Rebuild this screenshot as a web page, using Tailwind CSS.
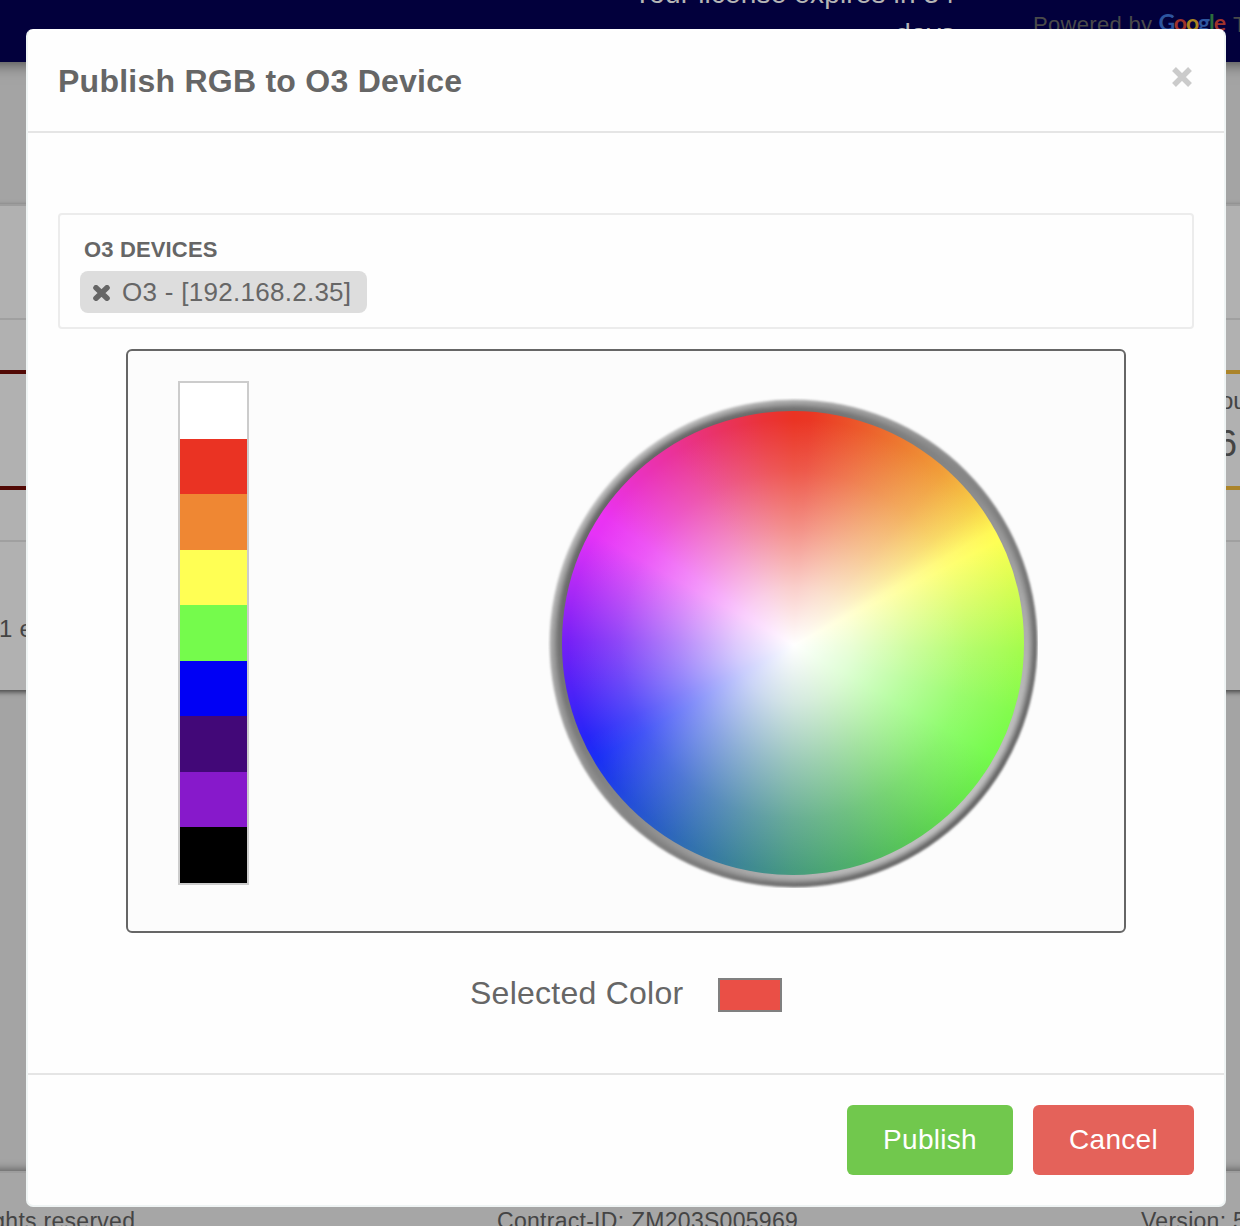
<!DOCTYPE html>
<html lang="en">
<head>
<meta charset="utf-8">
<title>Publish RGB to O3 Device</title>
<script src="https://cdn.jsdelivr.net/npm/@tailwindcss/browser@4"></script>
</head>
<body class="relative h-[1226px] w-[1240px] overflow-hidden bg-[#a4a4a4] font-['Liberation_Sans',Arial,sans-serif] text-[#666]">

<!-- Dimmed page behind the dialog -->
<div class="flex h-[1226px] flex-col overflow-hidden text-[#444]">
  <header class="relative z-10 -mx-[20px] flex h-[62px] shrink-0 justify-end overflow-visible bg-[#02003c] pr-[20px] shadow-[0_2px_14px_rgba(0,0,0,0.55)]">
    <p class="-mt-[26px] mr-[78px] w-[340px] text-right text-[28px] leading-[40px] tracking-[0.15px] text-[#b5b5b5]">Your license expires in 34 days</p>
    <p class="mt-[10px] flex w-[207px] items-baseline overflow-hidden text-[22px] leading-[26px] tracking-[0.32px] whitespace-nowrap text-[#4a4a4a]">Powered by<span class="ml-[6px] w-[67px] -translate-y-[1px] font-['Lato',sans-serif] text-[23px] font-bold tracking-[-1.1px]"><span class="text-[#2d559f]">G</span><span class="text-[#a0332b]">o</span><span class="text-[#ab8420]">o</span><span class="text-[#2d559f]">g</span><span class="text-[#2b6d3c]">l</span><span class="text-[#a0332b]">e</span></span><span class="ml-[8px]">Translate</span></p>
  </header>
  <main class="-mx-[20px] mt-[142px] h-[486px] shrink-0 border-t-2 border-[#9d9d9d] bg-[#b1b1b1] shadow-[0_2px_5px_rgba(0,0,0,0.6)]">
    <div class="h-[114px] border-b-2 border-[#a0a0a0]"></div>
    <div class="flex h-[222px] justify-between border-b-2 border-[#a0a0a0] px-[20px] pt-[50px]">
      <div class="h-[120px] w-[600px] border-y-4 border-[#520a05]"></div>
      <div class="h-[120px] w-[600px] border-y-4 border-[#ab842a] pt-[13px]">
        <p class="pl-[580px] text-[24px] leading-[28px] whitespace-nowrap">our</p>
        <p class="mt-[9px] pl-[577px] text-[36px] leading-[40px]">6</p>
      </div>
    </div>
    <p class="mt-[73px] pl-[19px] text-[24px] leading-[28px] tracking-[0.2px]">1 entries</p>
  </main>
  <footer class="-mx-[20px] mt-[481px] flex h-[60px] shrink-0 border-t-2 border-[#9d9d9d] bg-[#a6a6a6] pt-[35px] text-[23px] leading-[26px] tracking-[0.28px] whitespace-nowrap shadow-[0_-2px_8px_rgba(0,0,0,0.4)]">
    <span class="w-[517px] shrink-0 -indent-[10px]">Rights reserved</span>
    <span class="w-[644px] shrink-0">Contract-ID: ZM203S005969</span>
    <span class="shrink-0">Version: 5.0</span>
  </footer>
</div>

<!-- Dialog -->
<section class="absolute top-[29px] left-[26px] z-20 flex h-[1178px] w-[1200px] flex-col rounded-[7px] border-2 border-[#eff4f4] border-t-white bg-[#fefefe]">
  <header class="flex h-[102px] shrink-0 justify-between border-b-2 border-[#e5e5e5] pr-[32px] pl-[30px]">
    <h1 class="pt-[32px] text-[32px] leading-[36px] font-bold tracking-[0.25px]">Publish RGB to O3 Device</h1>
    <svg class="mt-[36px] h-[20px] w-[20px]" viewBox="0 0 20 20"><path d="M2 2 18 18M18 2 2 18" stroke="#cbcbcb" stroke-width="5.4"/></svg>
  </header>

  <div class="flex h-[940px] shrink-0 flex-col px-[30px] pt-[80px]">
    <div class="h-[116px] shrink-0 rounded-[4px] border-2 border-[#ececec] pt-[21px] pl-[20px]">
      <h2 class="pl-[4px] text-[22px] leading-[28px] font-bold tracking-[0.15px]">O3 DEVICES</h2>
      <div class="mt-[7px] flex h-[42px] w-[287px] items-center rounded-[8px] bg-[#ddd] pl-[13px]">
        <svg class="mt-[2px] h-[16px] w-[17px]" viewBox="0 0 17 16"><path d="M3 2.8 14 13.2M14 2.8 3 13.2" stroke="#666" stroke-width="5.6" stroke-linecap="round"/></svg>
        <span class="ml-[12px] text-[26px] leading-[30px] tracking-[0.28px] whitespace-nowrap">O3 - [192.168.2.35]</span>
      </div>
    </div>

    <div class="mx-[68px] mt-[20px] flex h-[584px] shrink-0 justify-between rounded-[6px] border-2 border-[#666] bg-[#fcfcfc] pt-[30px] pr-[86px] pl-[50px]">
      <div class="grid h-[504px] w-[71px] grid-rows-9 border-2 border-[#ccc]">
        <div class="bg-white"></div>
        <div class="bg-[#ea3323]"></div>
        <div class="bg-[#ef8733]"></div>
        <div class="bg-[#ffff54]"></div>
        <div class="bg-[#75fb4c]"></div>
        <div class="bg-[#0000f5]"></div>
        <div class="bg-[#420878]"></div>
        <div class="bg-[#8719cb]"></div>
        <div class="bg-black"></div>
      </div>
      <div class="relative mt-[17px] h-[490px] w-[490px]">
        <svg class="absolute inset-0 h-[490px] w-[490px]" viewBox="0 0 490 490">
          <defs>
            <linearGradient id="r1" x1=".15" y1=".15" x2=".85" y2=".85"><stop offset="0" stop-color="#c4c4c4"/><stop offset=".5" stop-color="#8c8c8c"/><stop offset="1" stop-color="#707070"/></linearGradient>
            <linearGradient id="r2" x1=".15" y1=".15" x2=".85" y2=".85"><stop offset="0" stop-color="#adadad"/><stop offset=".5" stop-color="#868686"/><stop offset="1" stop-color="#686868"/></linearGradient>
            <linearGradient id="r3" x1=".15" y1=".15" x2=".85" y2=".85"><stop offset="0" stop-color="#949494"/><stop offset=".5" stop-color="#868686"/><stop offset="1" stop-color="#8c8c8c"/></linearGradient>
            <linearGradient id="r4" x1=".15" y1=".15" x2=".85" y2=".85"><stop offset="0" stop-color="#747474"/><stop offset=".5" stop-color="#868686"/><stop offset="1" stop-color="#acacac"/></linearGradient>
            <linearGradient id="r5" x1=".15" y1=".15" x2=".85" y2=".85"><stop offset="0" stop-color="#666"/><stop offset=".5" stop-color="#888"/><stop offset="1" stop-color="#c0c0c0"/></linearGradient>
            <filter id="soft"><feGaussianBlur stdDeviation=".8"/></filter>
          </defs>
          <g filter="url(#soft)">
            <circle cx="245.5" cy="245.5" r="244" fill="url(#r1)"/>
            <circle cx="245.5" cy="245.5" r="242" fill="url(#r2)"/>
            <circle cx="245.5" cy="245.5" r="239.5" fill="url(#r3)"/>
            <circle cx="245.5" cy="245.5" r="237.2" fill="url(#r4)"/>
            <circle cx="245.5" cy="245.5" r="235" fill="url(#r5)"/>
          </g>
        </svg>
        <div class="absolute top-[13px] left-[14px] h-[464px] w-[462px] rounded-full bg-[radial-gradient(circle_at_232px_234px,#fff_0,rgba(255,255,255,0.76)_58px,rgba(255,255,255,0.46)_116px,rgba(255,255,255,0.18)_174px,rgba(255,255,255,0)_226px),conic-gradient(from_0deg_at_232px_234px,#ea3323_0deg,#ea3624_4deg,#ec5a2b_17deg,#ed7d31_29deg,#f1a03a_41deg,#f7d149_53deg,#fff855_60deg,#feff55_63deg,#d4fd52_76deg,#a5fc4e_91deg,#83fb4d_107deg,#75fb4c_119deg,#68e64d_133deg,#5acb55_148deg,#50b268_163deg,#479a80_181deg,#3c8498_195deg,#2f6cb5_210deg,#234ddb_227deg,#1a2ff5_240deg,#2625f7_246deg,#4d22f7_258deg,#7620f6_271deg,#b22af6_286deg,#e633f7_299deg,#ea33f2_304deg,#ea32c4_316deg,#ea3299_328deg,#e93366_340deg,#ea3338_352deg,#ea3323_360deg)]"></div>
      </div>
    </div>

    <div class="mt-[41px] flex items-center pl-[412px]">
      <span class="text-[32px] leading-[36px] tracking-[0.25px]">Selected Color</span>
      <span class="mt-[4px] ml-[35px] h-[34px] w-[64px] border-2 border-[#808080] bg-[#ea4f46]"></span>
    </div>
  </div>

  <footer class="flex grow justify-end gap-[20px] border-t-2 border-[#e5e5e5] pt-[30px] pr-[30px]">
    <button class="h-[70px] w-[166px] rounded-[6px] bg-[#71c84d] text-[28px] tracking-[0.3px] text-white">Publish</button>
    <button class="h-[70px] w-[161px] rounded-[6px] bg-[#e4625a] text-[28px] tracking-[0.3px] text-white">Cancel</button>
  </footer>
</section>
</body>
</html>
